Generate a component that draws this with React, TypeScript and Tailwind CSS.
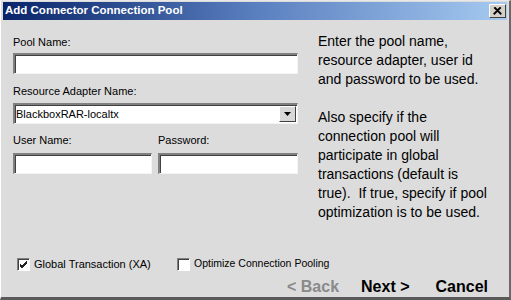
const sans = "font-['Liberation_Sans',Arial,sans-serif]";

function Field({ className = "" }: { className?: string }) {
  return (
    <div
      className={`h-[21px] bg-white border-t-2 border-l-2 border-t-[#808080] border-l-[#808080] border-b border-r border-b-[#f4f4f4] border-r-[#f4f4f4] shadow-[inset_1px_1px_0_#404040] ${className}`}
    />
  );
}

function Check({ checked }: { checked?: boolean }) {
  return (
    <div className="w-[13px] h-[13px] bg-white border-t border-l border-t-[#808080] border-l-[#808080] border-b border-r border-b-white border-r-white shadow-[inset_1px_1px_0_#404040] flex items-center justify-center">
      {checked && (
        <svg width="9" height="9" viewBox="0 0 9 9">
          <path d="M1 4 L3 6 L8 1 M1 5 L3 7 L8 2 M1 6 L3 8 L8 3" stroke="#222" strokeWidth="1" fill="none" />
        </svg>
      )}
    </div>
  );
}

export default function App() {
  return (
    <div
      className={`w-[511px] h-[300px] bg-[#dcdcdc] flex flex-col border-l border-l-white border-t border-t-[#e8e8e8] border-r-[2px] border-r-[#6a6a6a] border-b-[3px] border-b-[#5a5a5a] ${sans}`}
    >
      {/* title bar */}
      <div className="mx-[2px] mt-[1px] h-[18px] flex items-center justify-between bg-gradient-to-r from-[#0a246a] via-[#5a7fbf] to-[#a6caf0] pl-[2px] pr-[1px]">
        <span className="text-white font-bold text-[11.5px] leading-none">
          Add Connector Connection Pool
        </span>
        <div className="w-[17px] h-[14px] bg-[#d4d0c8] border border-t-white border-l-white border-r-[#404040] border-b-[#404040] flex items-center justify-center">
          <svg width="9" height="8" viewBox="0 0 9 8">
            <path d="M1 0.5 L8 7.5 M2 0.5 L8.5 7 M8 0.5 L1 7.5 M7 0.5 L0.5 7" stroke="#000" strokeWidth="1.1" fill="none" />
          </svg>
        </div>
      </div>

      {/* body */}
      <div className="flex-1 flex">
        <div className="ml-[12px] w-[285px] pt-[15px] text-[11px] text-black">
          <div className="h-[14px] leading-[14px]">Pool Name:</div>
          <Field className="mt-[4px]" />
          <div className="mt-[10px] h-[14px] leading-[14px]">Resource Adapter Name:</div>
          <div className="mt-[5px] h-[21px] bg-white border-t-2 border-l-2 border-t-[#808080] border-l-[#808080] border-b border-r border-b-[#f4f4f4] border-r-[#f4f4f4] shadow-[inset_1px_1px_0_#404040] flex items-center justify-between">
            <span className="pl-[1px] text-[11px]">BlackboxRAR-localtx</span>
            <div className="w-[17px] h-[16px] mr-[1px] bg-[#d8d8d8] border border-t-white border-l-white border-r-[#404040] border-b-[#404040] flex items-center justify-center">
              <svg width="7" height="4" viewBox="0 0 7 4">
                <path d="M0 0 H7 L3.5 4 Z" fill="#000" />
              </svg>
            </div>
          </div>
          <div className="mt-[9px] flex gap-[6px] h-[14px] leading-[14px]">
            <span className="w-[139px]">User Name:</span>
            <span>Password:</span>
          </div>
          <div className="mt-[6px] flex gap-[6px]">
            <Field className="w-[139px] h-[21px]" />
            <Field className="flex-1 h-[21px]" />
          </div>
        </div>
        <div className="ml-[20px] mt-[12px] text-[14px] leading-[19px] text-black">
          <p>
            Enter the pool name,
            <br />
            resource adapter, user id
            <br />
            and password to be used.
          </p>
          <p className="mt-[19px]">
            Also specify if the
            <br />
            connection pool will
            <br />
            participate in global
            <br />
            transactions (default is
            <br />
            true).&nbsp; If true, specify if pool
            <br />
            optimization is to be used.
          </p>
        </div>
      </div>

      {/* options */}
      <div className="h-[14px] flex items-center text-[11px] text-black ml-[16px]">
        <Check checked />
        <span className="ml-[4px] w-[143px]">Global Transaction (XA)</span>
        <Check />
        <span className="ml-[4px] text-[10.5px]">Optimize Connection Pooling</span>
      </div>

      {/* buttons */}
      <div className="mt-[6px] h-[20px] flex items-center justify-end pr-[21px] text-[16px] font-bold">
        <span className="text-[#8a8a8a]">&lt; Back</span>
        <span className="ml-[22px] text-black">Next &gt;</span>
        <span className="ml-[26px] text-black">Cancel</span>
      </div>
    </div>
  );
}
